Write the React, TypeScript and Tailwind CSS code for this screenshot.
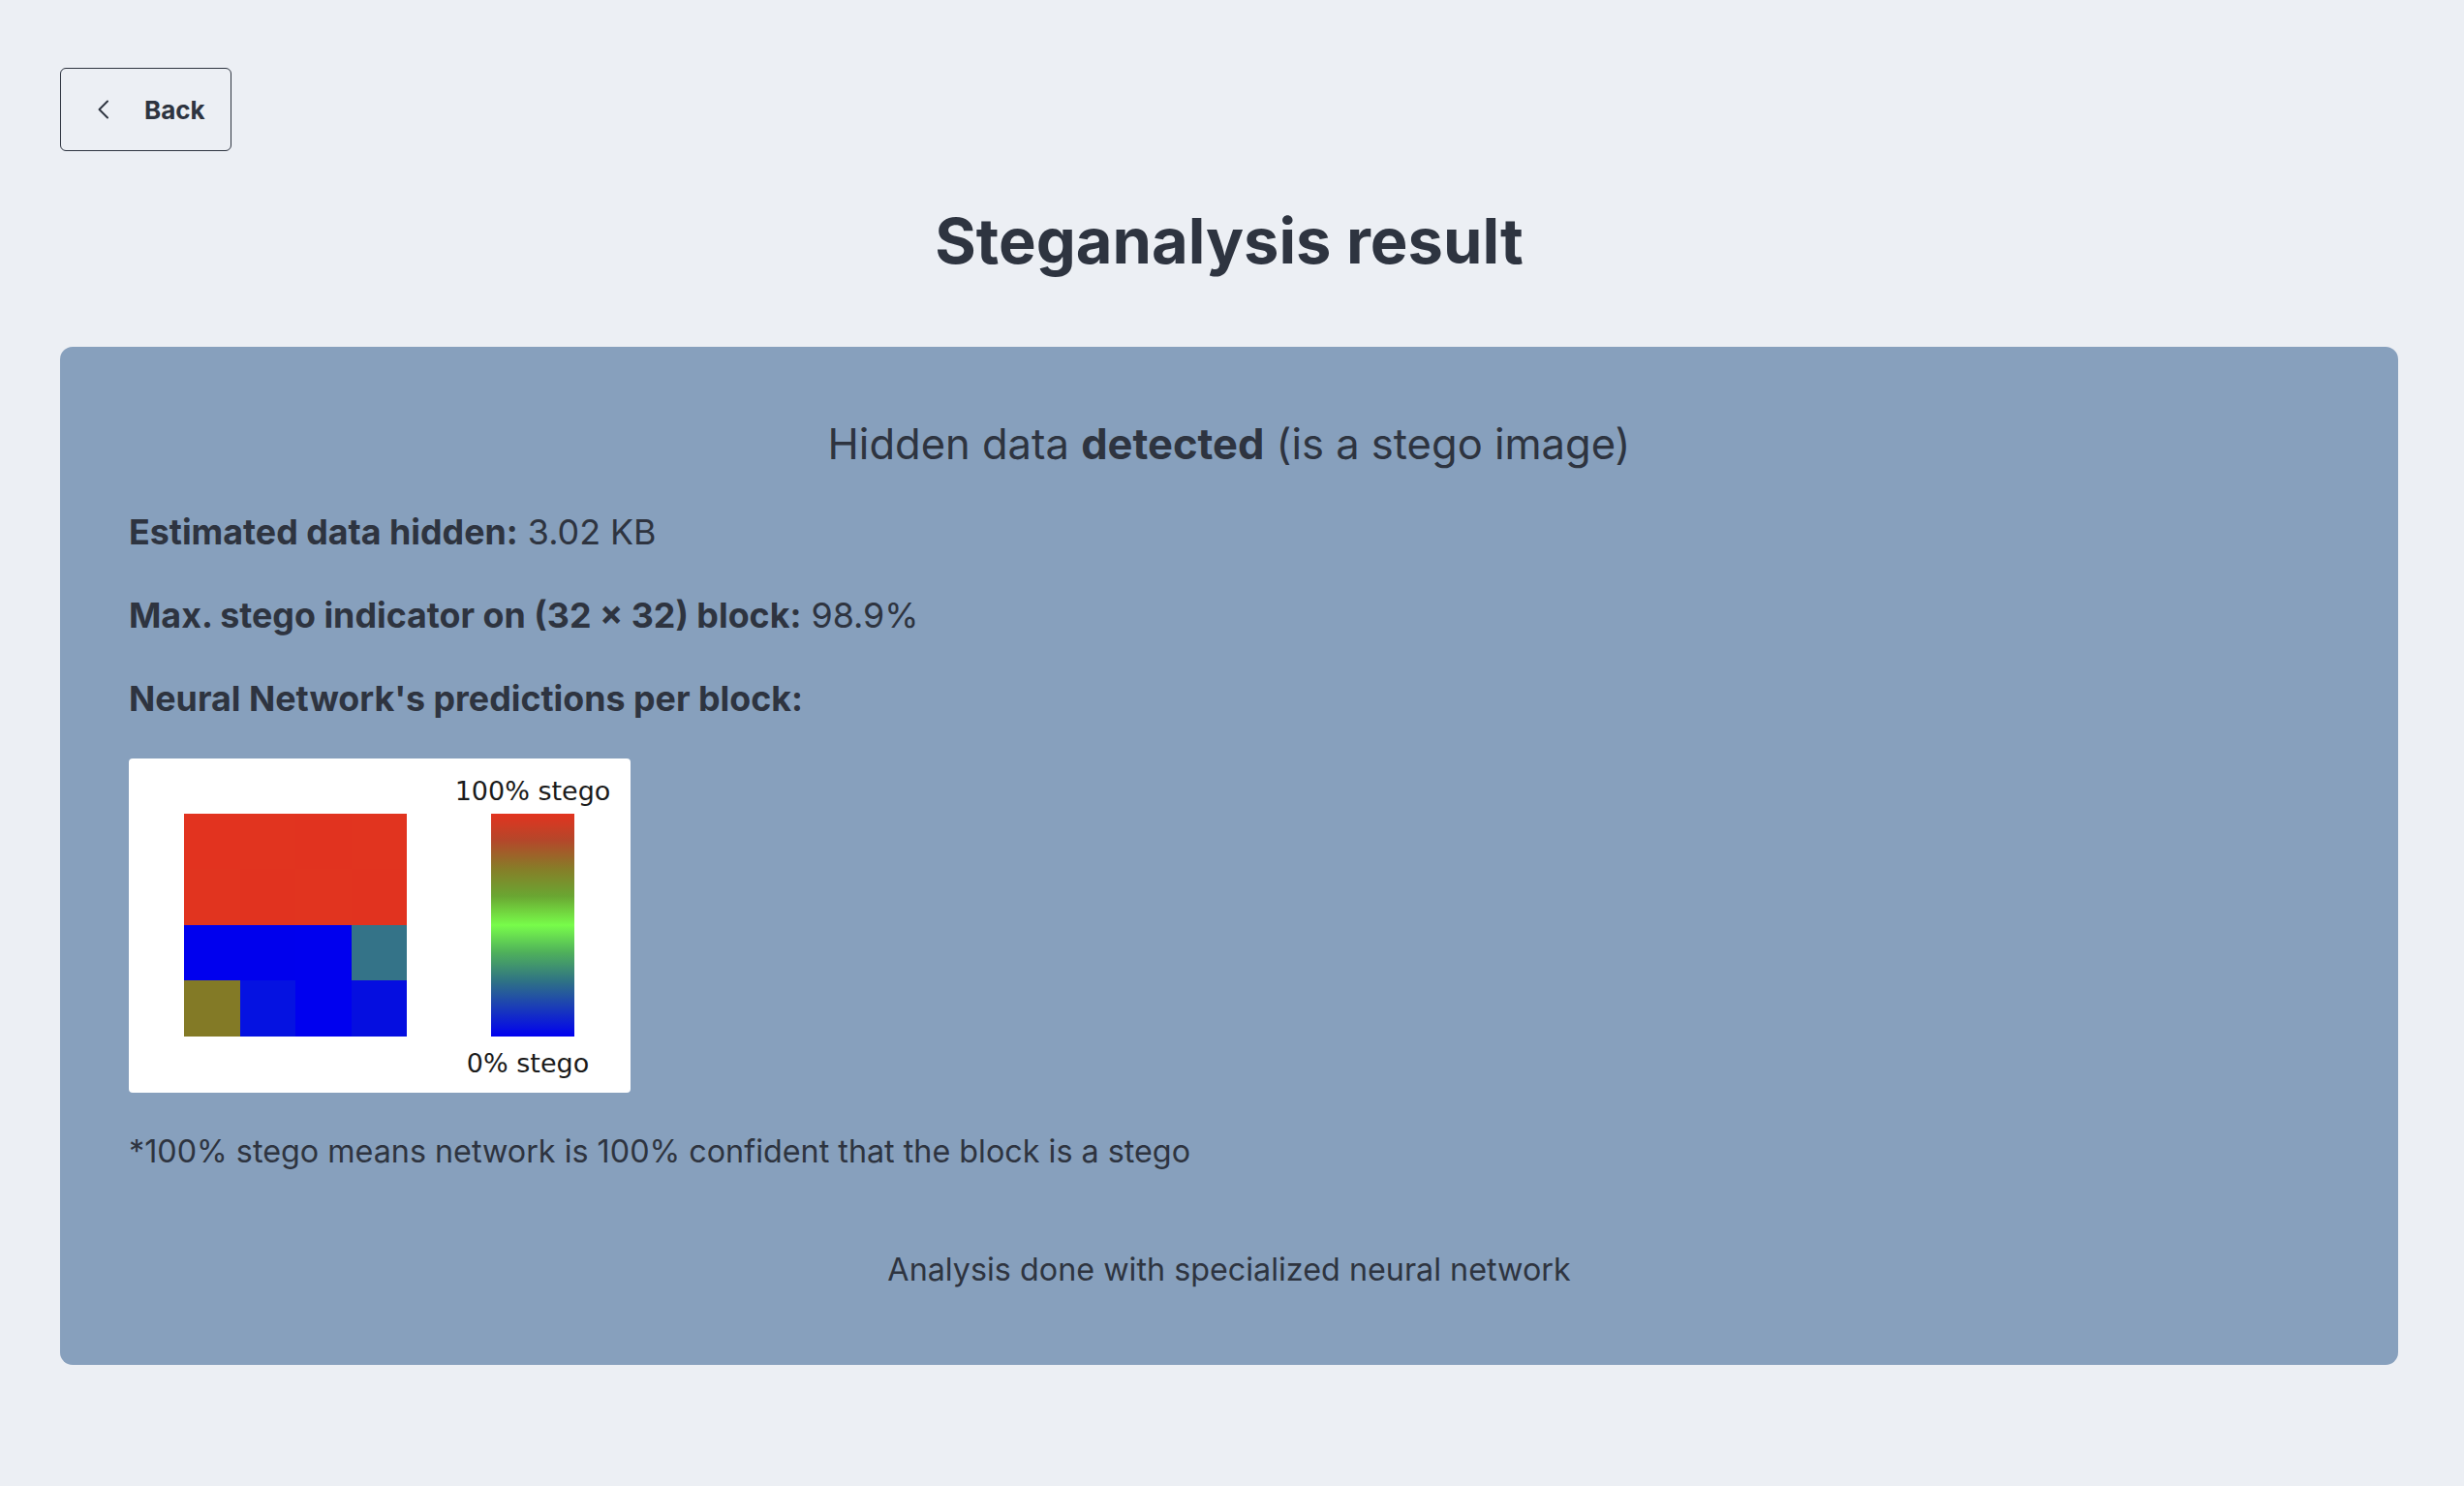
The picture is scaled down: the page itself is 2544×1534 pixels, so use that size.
import React from "react";

// block predictions, row by row (4 x 4 blocks)
const blocks = [
  "#e2331f", "#e1341f", "#e1331f", "#e1341f",
  "#e1341f", "#e1331f", "#e1341f", "#e1331f",
  "#0000ee", "#0000ed", "#0000ee", "#347388",
  "#837a26", "#0512e1", "#0000ef", "#050ee0",
];

function ChevronLeft() {
  return (
    <svg width="14" height="20" viewBox="0 0 14 20" fill="none">
      <polyline
        points="11,1.5 2.5,10 11,18.5"
        stroke="#2e3440"
        strokeWidth="2"
        strokeLinecap="round"
        strokeLinejoin="round"
      />
    </svg>
  );
}

function PredictionChart() {
  return (
    <div className="mt-[37.7px] flex h-[345px] w-[518px] rounded-[4px] bg-white pl-[57px] font-['DejaVu_Sans',sans-serif] text-[27px] text-[#1b1b1b]">
      <div className="mt-[57px] grid h-[230px] w-[230px] grid-cols-4 grid-rows-4">
        {blocks.map((c, i) => (
          <div key={i} style={{ backgroundColor: c }} />
        ))}
      </div>
      <div className="ml-[50px] flex w-[160px] flex-col items-center pt-[18px]">
        <span className="leading-[32px] whitespace-nowrap">100% stego</span>
        <div className="mt-[7px] h-[230px] w-[86px] bg-[linear-gradient(to_bottom,#e2331f_0%,#b4472a_12%,#867e28_25%,#6aa632_37%,#78fc4a_50%,#50b25a_62%,#2f7384_75%,#1a3cb8_87%,#0000f0_100%)]" />
        <span className="mt-[12px] -ml-[10px] leading-[32px] whitespace-nowrap">0% stego</span>
      </div>
    </div>
  );
}

export default function App() {
  return (
    <div className="min-h-screen bg-[#eceff4] pt-[70px] font-['Inter',sans-serif] text-[#2e3440]">
      <div className="ml-[62px] mr-[68px]">
        <button className="flex h-[86px] w-[177px] items-center rounded-[6px] border-[1.5px] border-[#2e3440] pl-[37px]">
          <ChevronLeft />
          <span className="ml-[35px] text-[26px] font-bold">Back</span>
        </button>

        <h1 className="mt-[54px] text-center text-[65px] font-bold leading-[78px]">
          Steganalysis result
        </h1>

        <div className="mt-[70px] rounded-[13px] bg-[#87a0bd] px-[71px] pt-[71.5px] pb-[73.7px]">
          <p className="text-center text-[43.5px] leading-[56px]">
            Hidden data <span className="font-bold">detected</span> (is a stego image)
          </p>

          <p className="mt-[39.6px] text-[35.8px] leading-[48px]">
            <span className="font-bold">Estimated data hidden:</span> 3.02 KB
          </p>
          <p className="mt-[38px] text-[35.8px] leading-[48px]">
            <span className="font-bold">Max. stego indicator on (32 × 32) block:</span> 98.9%
          </p>
          <p className="mt-[38px] text-[35.8px] font-bold leading-[48px]">
            Neural Network's predictions per block:
          </p>

          <PredictionChart />

          <p className="mt-[37.4px] text-[32.3px] leading-[48px]">
            *100% stego means network is 100% confident that the block is a stego
          </p>

          <p className="mt-[74px] text-center text-[32.3px] leading-[48px]">
            Analysis done with specialized neural network
          </p>
        </div>
      </div>
    </div>
  );
}
